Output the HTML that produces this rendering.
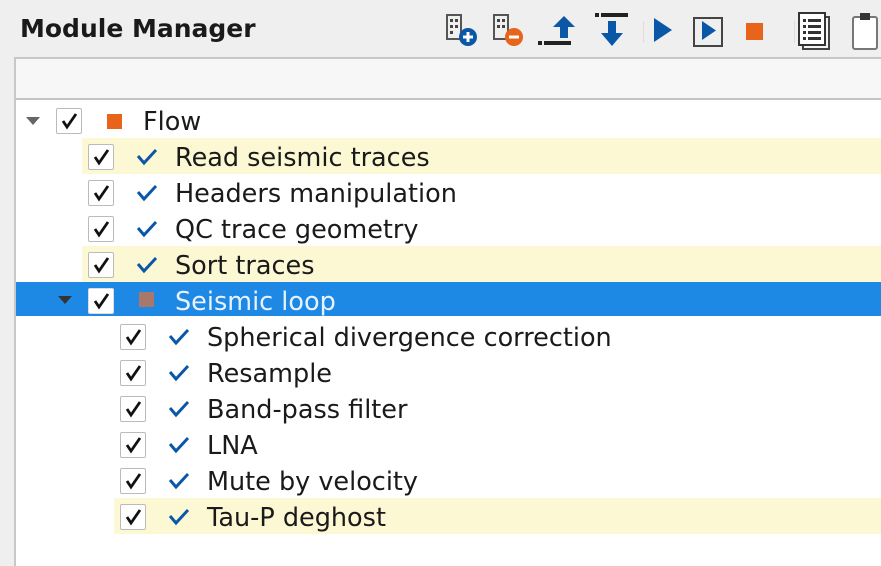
<!DOCTYPE html>
<html><head><style>
*{margin:0;padding:0;box-sizing:border-box}
body{width:881px;height:566px;background:#efefef;font-family:"DejaVu Sans","Liberation Sans",sans-serif;position:relative;overflow:hidden}
.title{position:absolute;left:20px;top:14px;font-size:25px;font-weight:bold;color:#1a1a1a}
.hdr{position:absolute;left:14px;top:57px;width:867px;height:43px;background:#f7f7f7;border-top:2px solid #c8c8c8;border-left:2px solid #c8c8c8;border-bottom:2px solid #c4c4c4}
.tree{position:absolute;left:14px;top:100px;width:867px;height:466px;background:#fff;border-left:2px solid #c8c8c8}
.row{position:absolute;height:36px;left:0;right:0}
.row span{position:absolute;font-size:25.5px;top:5px;color:#1a1a1a;white-space:nowrap}
.cb{position:absolute;top:6px;width:26px;height:26px;border:1.5px solid #bbb;background:#fff;border-radius:2px}
.cb svg{position:absolute;left:3px;top:3px}
.bc{position:absolute;top:10px}
.y{background:#fbf8d3}
.sel{background:#1e88e5}
</style></head><body>
<div class="title">Module Manager</div>
<svg style="position:absolute;left:440px;top:7px" width="441" height="44" viewBox="0 0 441 44">
 <g fill="none" stroke="#555" stroke-width="2"><rect x="7" y="8" width="14" height="24"/></g>
 <g fill="#444"><rect x="10" y="12" width="3" height="3"/><rect x="15" y="12" width="3" height="3"/><rect x="10" y="18" width="3" height="3"/><rect x="15" y="18" width="3" height="3"/><rect x="10" y="24" width="3" height="3"/></g>
 <circle cx="28" cy="30" r="9" fill="#0a57a8"/><path d="M23 30h10M28 25v10" stroke="#fff" stroke-width="3"/>
 <g fill="none" stroke="#555" stroke-width="2"><rect x="54" y="8" width="14" height="24"/></g>
 <g fill="#444"><rect x="57" y="12" width="3" height="3"/><rect x="62" y="12" width="3" height="3"/><rect x="57" y="18" width="3" height="3"/><rect x="62" y="18" width="3" height="3"/></g>
 <circle cx="74" cy="30" r="9" fill="#e8641a"/><path d="M69 30h10" stroke="#fff" stroke-width="3"/>
 <path d="M124 9l-11 11h7v11h8v-11h7z" fill="#0a57a8"/><rect x="98" y="34" width="4" height="4" fill="#222"/><rect x="104" y="34" width="27" height="4" fill="#222"/>
 <rect x="155" y="6" width="4" height="4" fill="#222"/><rect x="161" y="6" width="27" height="4" fill="#222"/><path d="M168 14v12h-7l11 13 11-13h-7v-12z" fill="#0a57a8"/>
 <rect x="203" y="14" width="1" height="22" fill="#ddd"/>
 <path d="M214 11v24l18-12z" fill="#0a57a8"/>
 <rect x="254" y="11" width="28" height="28" fill="none" stroke="#444" stroke-width="2"/><path d="M262 14v19l14-9.5z" fill="#0a57a8"/>
 <rect x="306" y="16" width="17" height="17" fill="#e8641a"/>
 <rect x="354" y="14" width="1" height="22" fill="#ddd"/>
 <rect x="363" y="10" width="26" height="32" fill="#f5f5f5" stroke="#444" stroke-width="2"/><rect x="359" y="6" width="26" height="32" fill="#fff" stroke="#333" stroke-width="2"/>
 <g fill="#333"><rect x="363" y="12" width="3" height="3"/><rect x="368" y="12" width="13" height="3"/><rect x="363" y="18" width="3" height="3"/><rect x="368" y="18" width="13" height="3"/><rect x="363" y="24" width="3" height="3"/><rect x="368" y="24" width="13" height="3"/><rect x="363" y="30" width="3" height="3"/><rect x="368" y="30" width="13" height="3"/></g>
 <rect x="413" y="10" width="24" height="32" fill="#fff" stroke="#777" stroke-width="2" rx="2"/><rect x="420" y="6" width="10" height="7" fill="#333"/>
</svg>
<div class="hdr"></div>
<div class="tree">
<div class="row" style="top:2px"><svg style="position:absolute;left:10px;top:15px" width="14" height="8"><path d="M0 0h14l-7 8z" fill="#666"/></svg><div class="cb" style="left:40px"><svg width="18" height="18"><path d="M3 9l4 6 9-13" fill="none" stroke="#111" stroke-width="2.8"/></svg></div><div style="position:absolute;left:91px;top:12px;width:15px;height:15px;background:#e8641a"></div><span style="left:127px">Flow</span></div>
<div class="row y" style="top:38px;left:66px"></div>
<div class="row y" style="top:146px;left:66px"></div>
<div class="row y" style="top:398px;left:98px"></div>
<div class="row sel" style="top:182px;height:34px"></div>
<div class="row" style="top:38px"><div class="cb" style="left:72px"><svg width="18" height="18"><path d="M3 9l4 6 9-13" fill="none" stroke="#111" stroke-width="2.8"/></svg></div><svg class="bc" style="left:120px" width="22" height="18"><path d="M2 8l6 7L20 2" fill="none" stroke="#0a57a8" stroke-width="3"/></svg><span style="left:159px">Read seismic traces</span></div>
<div class="row" style="top:74px"><div class="cb" style="left:72px"><svg width="18" height="18"><path d="M3 9l4 6 9-13" fill="none" stroke="#111" stroke-width="2.8"/></svg></div><svg class="bc" style="left:120px" width="22" height="18"><path d="M2 8l6 7L20 2" fill="none" stroke="#0a57a8" stroke-width="3"/></svg><span style="left:159px">Headers manipulation</span></div>
<div class="row" style="top:110px"><div class="cb" style="left:72px"><svg width="18" height="18"><path d="M3 9l4 6 9-13" fill="none" stroke="#111" stroke-width="2.8"/></svg></div><svg class="bc" style="left:120px" width="22" height="18"><path d="M2 8l6 7L20 2" fill="none" stroke="#0a57a8" stroke-width="3"/></svg><span style="left:159px">QC trace geometry</span></div>
<div class="row" style="top:146px"><div class="cb" style="left:72px"><svg width="18" height="18"><path d="M3 9l4 6 9-13" fill="none" stroke="#111" stroke-width="2.8"/></svg></div><svg class="bc" style="left:120px" width="22" height="18"><path d="M2 8l6 7L20 2" fill="none" stroke="#0a57a8" stroke-width="3"/></svg><span style="left:159px">Sort traces</span></div>
<div class="row" style="top:182px"><svg style="position:absolute;left:42px;top:14px" width="14" height="8"><path d="M0 0h14l-7 8z" fill="#333"/></svg><div class="cb" style="left:72px;border-color:#ddd"><svg width="18" height="18"><path d="M3 9l4 6 9-13" fill="none" stroke="#111" stroke-width="2.8"/></svg></div><div style="position:absolute;left:123px;top:10px;width:15px;height:15px;background:#a9786a"></div><span style="left:159px;color:#e8f2ff">Seismic loop</span></div>
<div class="row" style="top:218px"><div class="cb" style="left:104px"><svg width="18" height="18"><path d="M3 9l4 6 9-13" fill="none" stroke="#111" stroke-width="2.8"/></svg></div><svg class="bc" style="left:152px" width="22" height="18"><path d="M2 8l6 7L20 2" fill="none" stroke="#0a57a8" stroke-width="3"/></svg><span style="left:191px">Spherical divergence correction</span></div>
<div class="row" style="top:254px"><div class="cb" style="left:104px"><svg width="18" height="18"><path d="M3 9l4 6 9-13" fill="none" stroke="#111" stroke-width="2.8"/></svg></div><svg class="bc" style="left:152px" width="22" height="18"><path d="M2 8l6 7L20 2" fill="none" stroke="#0a57a8" stroke-width="3"/></svg><span style="left:191px">Resample</span></div>
<div class="row" style="top:290px"><div class="cb" style="left:104px"><svg width="18" height="18"><path d="M3 9l4 6 9-13" fill="none" stroke="#111" stroke-width="2.8"/></svg></div><svg class="bc" style="left:152px" width="22" height="18"><path d="M2 8l6 7L20 2" fill="none" stroke="#0a57a8" stroke-width="3"/></svg><span style="left:191px">Band-pass filter</span></div>
<div class="row" style="top:326px"><div class="cb" style="left:104px"><svg width="18" height="18"><path d="M3 9l4 6 9-13" fill="none" stroke="#111" stroke-width="2.8"/></svg></div><svg class="bc" style="left:152px" width="22" height="18"><path d="M2 8l6 7L20 2" fill="none" stroke="#0a57a8" stroke-width="3"/></svg><span style="left:191px">LNA</span></div>
<div class="row" style="top:362px"><div class="cb" style="left:104px"><svg width="18" height="18"><path d="M3 9l4 6 9-13" fill="none" stroke="#111" stroke-width="2.8"/></svg></div><svg class="bc" style="left:152px" width="22" height="18"><path d="M2 8l6 7L20 2" fill="none" stroke="#0a57a8" stroke-width="3"/></svg><span style="left:191px">Mute by velocity</span></div>
<div class="row" style="top:398px"><div class="cb" style="left:104px"><svg width="18" height="18"><path d="M3 9l4 6 9-13" fill="none" stroke="#111" stroke-width="2.8"/></svg></div><svg class="bc" style="left:152px" width="22" height="18"><path d="M2 8l6 7L20 2" fill="none" stroke="#0a57a8" stroke-width="3"/></svg><span style="left:191px">Tau-P deghost</span></div>
</div>
</body></html>
